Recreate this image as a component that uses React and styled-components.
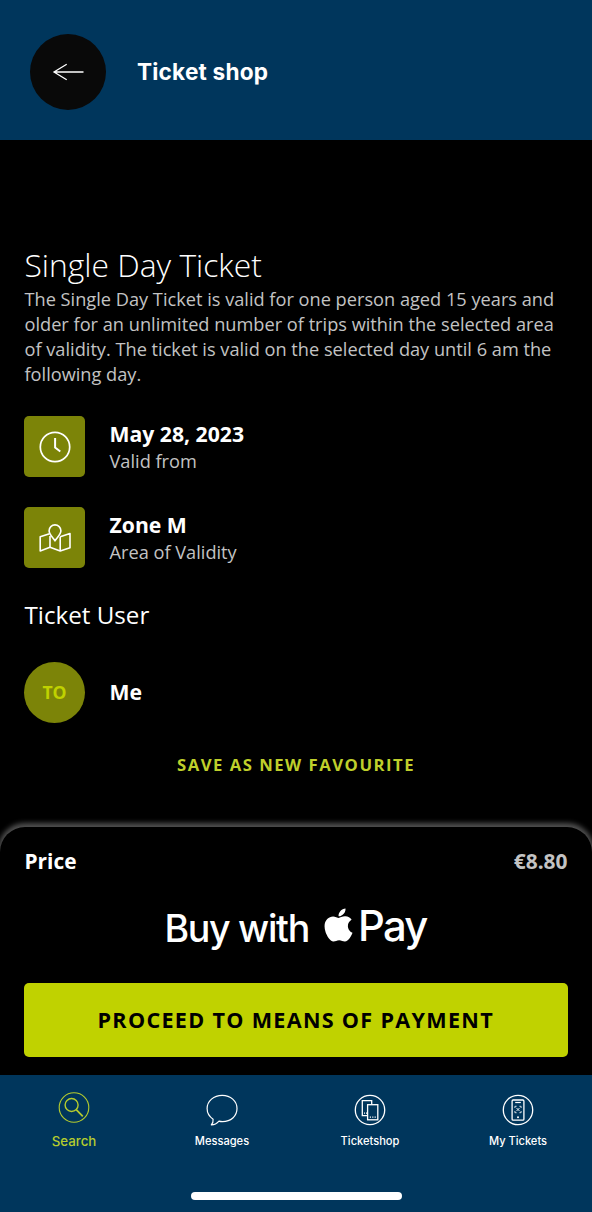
import React from 'react';
import styled, {createGlobalStyle} from 'styled-components';
import {FaApple} from 'react-icons/fa';

const colors = {
  navy: '#00365c',
  lime: '#c0d200',
  olive: '#7c8408',
  grey: '#c3c3c3',
};

const TABS = [
  {id: 'search', label: 'Search', active: true},
  {id: 'messages', label: 'Messages'},
  {id: 'shop', label: 'Ticketshop'},
  {id: 'tickets', label: 'My Tickets'},
];

const icons = {
  search: (
    <svg viewBox="0 0 32 32" width="32" height="32" fill="none" stroke="currentColor" strokeWidth="1.1">
      <circle cx="16" cy="15.5" r="14.8"/>
      <circle cx="13.6" cy="13" r="6.5" strokeWidth="1.4"/>
      <path d="M18.2 17.7 24.8 24.4" strokeWidth="1.7"/>
    </svg>
  ),
  messages: (
    <svg viewBox="0 0 32 32" width="32" height="32" fill="none" stroke="currentColor" strokeWidth="1.2" strokeLinejoin="round">
      <path d="M16.2 1.4C24.6 1.4 31 6.9 31 14.6S24.8 27.6 16.5 27.6c-1.3 0-2.4-.1-3.5-.5-1.9 2.1-4.5 3.8-7.7 3.7 1.5-1.5 2-3.6 1.8-5.6C3.3 22.7 1.1 19 1.1 14.6 1.1 6.9 7.8 1.4 16.2 1.4Z"/>
    </svg>
  ),
  shop: (
    <svg viewBox="0 0 32 32" width="32" height="32" fill="none" stroke="currentColor" strokeWidth="1.3">
      <circle cx="16" cy="16" r="14.7"/>
      <path d="M13.3 21.7H8.3V6.7h9.4v3.6"/>
      <rect x="13.6" y="10.7" width="10.2" height="15.1"/>
      <path d="M10 19.2h1m1 0h1M15.8 23.2h1.2m1.2 0h1.2m1.2 0h1.2"/>
    </svg>
  ),
  tickets: (
    <svg viewBox="0 0 32 32" width="32" height="32" fill="none" stroke="currentColor" strokeWidth="1.3">
      <circle cx="16" cy="16" r="14.7"/>
      <rect x="10.1" y="6" width="11.8" height="20.2" rx="1"/>
      <path d="M13.2 8.5h5.6" strokeWidth="1.2"/>
      <path d="M12.9 14v-1.7h1.7M17.4 12.3h1.7V14M19.1 17v1.7h-1.7M14.6 18.7h-1.7V17" strokeWidth=".8"/>
      <path d="m14.5 14 3 3m0-3-3 3" strokeWidth=".9"/>
      <circle cx="16" cy="23.2" r="1" fill="currentColor" stroke="none"/>
    </svg>
  ),
};

const BackArrow = () => (
  <svg viewBox="0 0 32 18" width="32" height="18" fill="none" stroke="#fff" strokeWidth="1.3">
    <path d="M2 9H31.500M14.700 1.200 2 9l12.700 7.800"/>
  </svg>
);

const ClockIcon = () => (
  <svg viewBox="0 0 32 32" width="32" height="32" fill="none" stroke="#fff">
    <circle cx="16" cy="16" r="14.7" strokeWidth="1.7"/>
    <path d="M16.1 7v9.5l5.2 4" strokeWidth="2"/>
  </svg>
);

const MapIcon = () => (
  <svg viewBox="0 0 32 32" width="32" height="32" fill="none" stroke="#fff" strokeWidth="1.6" strokeLinejoin="round">
    <path d="M10.5 11.7 1.2 14.8v14.1l9.8-3.6 10.2 3.6 9.8-3.2V11.5l-9.8 3.2"/>
    <path d="M11 14v11.3M21.2 14.7v14.2"/>
    <path d="M16 18.8c-2.3-3.5-5.9-6.4-5.9-10a5.9 5.9 0 0 1 11.8 0c0 3.6-3.6 6.5-5.9 10Z"/>
  </svg>
);

const App = () => {
  return (
    <Page>
      <GlobalStyle/>
      <Header>
        <BackButton aria-label="Back"><BackArrow/></BackButton>
        <HeaderTitle>Ticket shop</HeaderTitle>
      </Header>
      <Content>
        <TicketTitle>Single Day Ticket</TicketTitle>
        <Description>
          The Single Day Ticket is valid for one person aged 15 years and
          older for an unlimited number of trips within the selected area
          of validity. The ticket is valid on the selected day until 6 am the
          following day.
        </Description>
        <InfoRow>
          <IconTile><ClockIcon/></IconTile>
          <InfoText>
            <InfoValue>May 28, 2023</InfoValue>
            <InfoLabel>Valid from</InfoLabel>
          </InfoText>
        </InfoRow>
        <InfoRow>
          <IconTile><MapIcon/></IconTile>
          <InfoText>
            <InfoValue>Zone M</InfoValue>
            <InfoLabel>Area of Validity</InfoLabel>
          </InfoText>
        </InfoRow>
        <SectionTitle>Ticket User</SectionTitle>
        <UserRow>
          <Avatar>TO</Avatar>
          <InfoValue>Me</InfoValue>
        </UserRow>
        <FavouriteButton>SAVE AS NEW FAVOURITE</FavouriteButton>
      </Content>
      <Checkout>
        <PriceRow>
          <span>Price</span>
          <Amount>€8.80</Amount>
        </PriceRow>
        <ApplePayButton>
          <BuyWith>Buy with</BuyWith>
          <AppleLogo/>
          <Pay>Pay</Pay>
        </ApplePayButton>
        <ProceedButton>PROCEED TO MEANS OF PAYMENT</ProceedButton>
      </Checkout>
      <TabBar>
        <Tabs>
          {TABS.map(({id, label, active}) => (
            <Tab key={id} $active={active}>
              {icons[id]}
              <TabLabel $active={active}>{label}</TabLabel>
            </Tab>
          ))}
        </Tabs>
        <HomeIndicator/>
      </TabBar>
    </Page>
  )
}

export default App;

const GlobalStyle = createGlobalStyle`
* {
  box-sizing: border-box;
}
body {
  margin: 0;
  background: #000;
}
button {
  border: 0;
  padding: 0;
  background: none;
  font-family: inherit;
}
svg {
  display: block;
  flex-shrink: 0;
}
`
const Page = styled.div`
display: flex;
flex-direction: column;
width: 592px;
height: 1212px;
overflow: hidden;
background: #000;
color: #fff;
font-family: "Open Sans", sans-serif;
white-space: nowrap;
`
const Header = styled.header`
display: flex;
align-items: center;
height: 140px;
padding: 3px 30.4px 0;
background: ${colors.navy};
`
const BackButton = styled.button`
display: flex;
align-items: center;
justify-content: center;
width: 76px;
height: 76px;
border-radius: 50%;
background: #090909;
`
const HeaderTitle = styled.h1`
margin: 0 0 0 30.6px;
font: 700 22.6px/30px Inter, sans-serif;
letter-spacing: .2px;
`
const Content = styled.main`
display: flex;
flex-direction: column;
height: 687px;
padding: 103px 24.5px 0;
`
const TicketTitle = styled.h2`
margin: 0;
font-size: 31.8px;
font-weight: 300;
line-height: 43px;
`
const Description = styled.p`
margin: 1.3px 0 29.4px;
font-size: 18.2px;
line-height: 24.8px;
color: ${colors.grey};
white-space: normal;
`
const InfoRow = styled.div`
display: flex;
align-items: center;
height: 61px;
margin-bottom: 30px;
`
const IconTile = styled.div`
display: flex;
align-items: center;
justify-content: center;
width: 61px;
height: 61px;
margin-left: -.5px;
padding-top: 1px;
border-radius: 5px;
background: ${colors.olive};
`
const InfoText = styled.div`
display: flex;
flex-direction: column;
padding-top: 1.4px;
`
const InfoValue = styled.span`
margin-left: 24.5px;
padding-bottom: 1px;
font-size: 21.2px;
font-weight: 700;
line-height: 28px;
`
const InfoLabel = styled.span`
margin-left: 24.5px;
font-size: 18.2px;
line-height: 25px;
color: ${colors.grey};
`
const SectionTitle = styled.h3`
margin: 0 0 30px;
font-size: 24.2px;
font-weight: 400;
line-height: 34px;
`
const UserRow = styled.div`
display: flex;
align-items: center;
`
const Avatar = styled.div`
display: flex;
align-items: center;
justify-content: center;
width: 61px;
height: 61px;
margin-left: -.5px;
padding-bottom: 1px;
border-radius: 50%;
background: ${colors.olive};
color: ${colors.lime};
font-size: 17.6px;
font-weight: 700;
`
const FavouriteButton = styled.button`
align-self: center;
margin-top: 30px;
color: #bfcf2b;
font-size: 16.7px;
font-weight: 700;
line-height: 24px;
letter-spacing: 1.5px;
`
const Checkout = styled.section`
display: flex;
flex-direction: column;
height: 248px;
padding: 20px 24.5px 0;
border-radius: 25px 25px 0 0;
background: #000;
box-shadow: 0 -2px 5px 2px #505050;
`
const PriceRow = styled.div`
display: flex;
justify-content: space-between;
font-size: 20.9px;
font-weight: 700;
line-height: 28px;
`
const Amount = styled.span`
color: ${colors.grey};
`
const ApplePayButton = styled.button`
display: flex;
justify-content: center;
height: 60px;
margin-top: 24px;
padding-right: 1px;
color: #fff;
font-family: Inter, sans-serif;
`
const BuyWith = styled.span`
font-size: 37.6px;
font-weight: 500;
line-height: 59px;
letter-spacing: -1.3px;
`
const AppleLogo = styled(FaApple)`
width: 29px;
height: 38px;
margin: 7px 5px 0 15px;
`
const Pay = styled.span`
font-size: 41.8px;
font-weight: 500;
line-height: 54px;
letter-spacing: -1.7px;
`
const ProceedButton = styled.button`
width: 543.5px;
height: 74px;
margin-top: 24px;
margin-left: -.5px;
border-radius: 5px;
background: ${colors.lime};
color: #000;
font-size: 21.6px;
font-weight: 700;
line-height: 30px;
letter-spacing: 1.3px;
`
const TabBar = styled.nav`
display: flex;
flex-direction: column;
align-items: center;
justify-content: space-between;
height: 137px;
padding-bottom: 12px;
background: ${colors.navy};
`
const Tabs = styled.div`
display: grid;
grid-template-columns: repeat(4, 1fr);
width: 100%;
`
const Tab = styled.a`
display: flex;
flex-direction: column;
align-items: center;
padding-top: ${props => props.$active ? '17px' : '18.5px'};
color: ${props => props.$active ? '#b5cc2e' : '#fff'};
`
const TabLabel = styled.span`
margin-top: ${props => props.$active ? '7px' : '5px'};
font-family: Inter, sans-serif;
font-size: ${props => props.$active ? '13.3px' : '11.1px'};
font-weight: 500;
line-height: 20px;
`
const HomeIndicator = styled.div`
width: 211px;
height: 8px;
border-radius: 4px;
background: #fff;
`
